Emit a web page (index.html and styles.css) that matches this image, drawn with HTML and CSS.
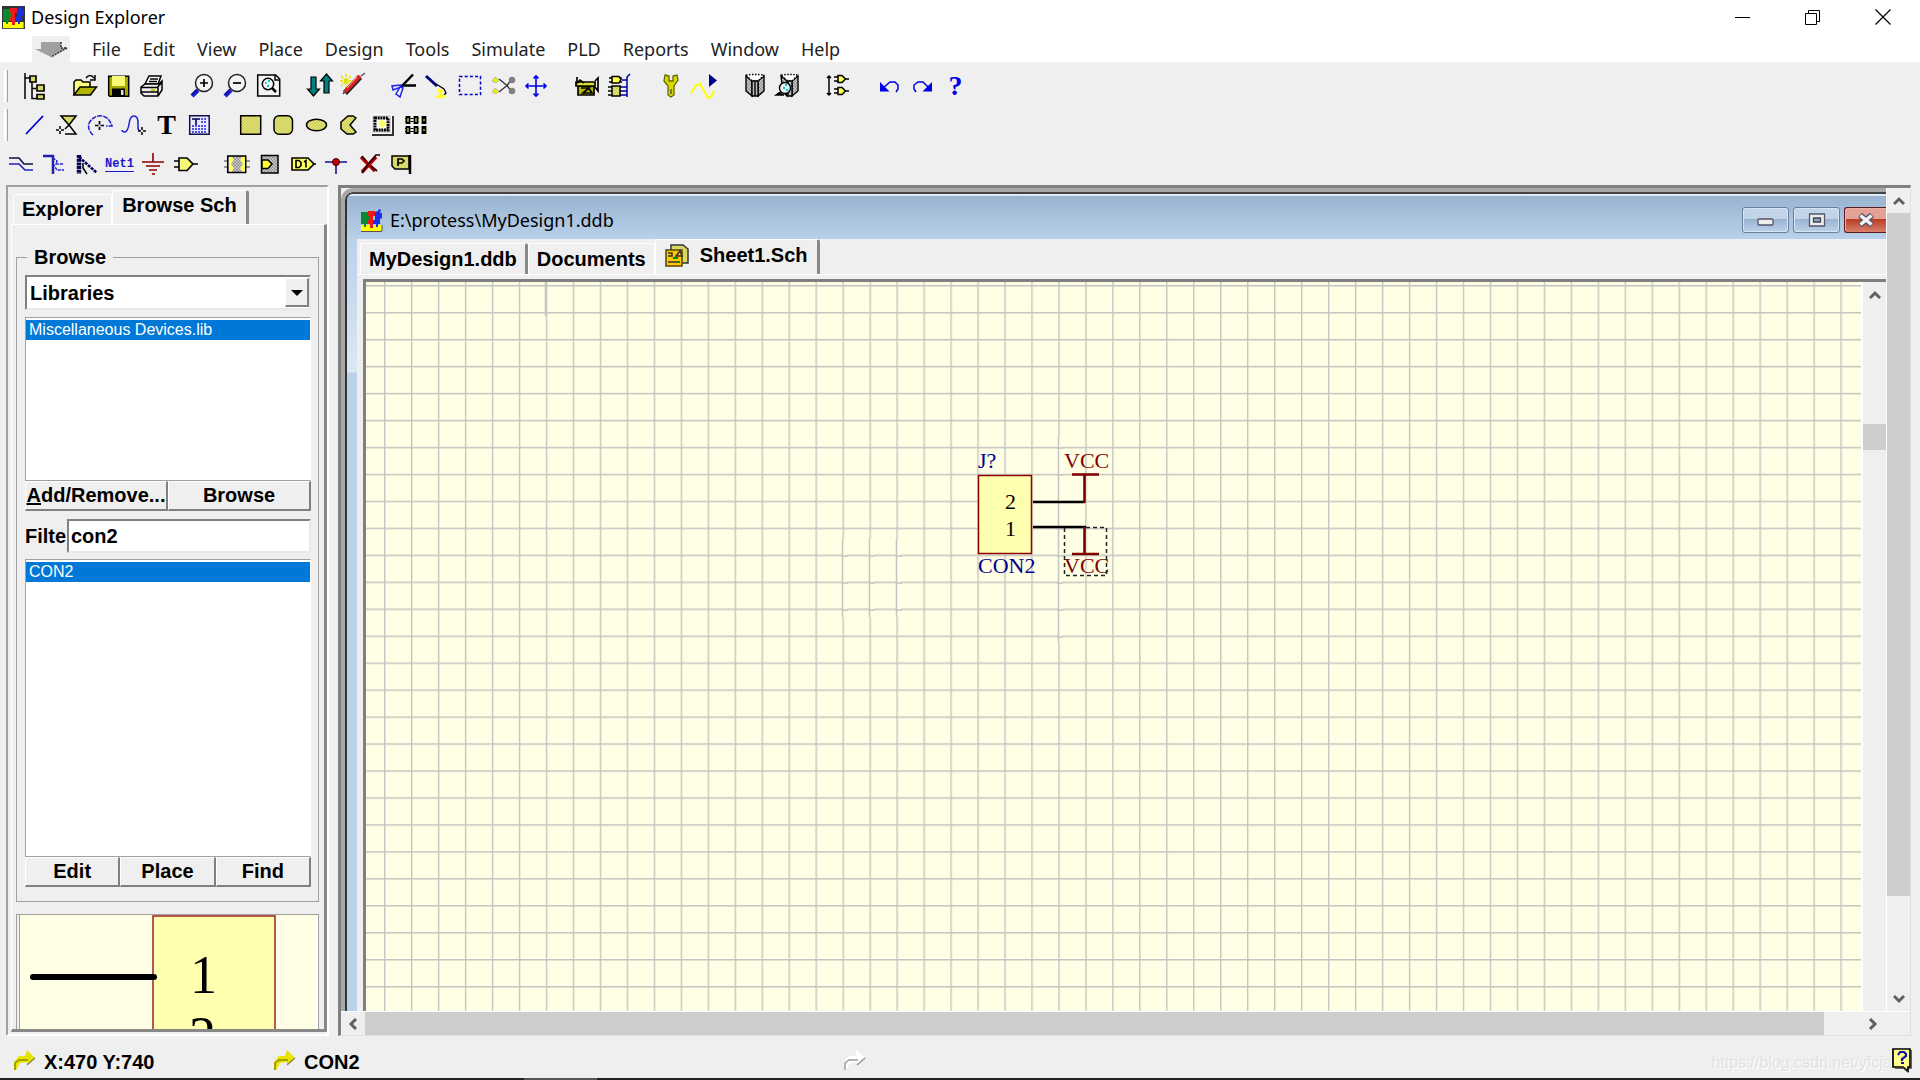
FILE: index.html
```
<!DOCTYPE html>
<html lang="en">
<head>
  <meta charset="UTF-8">
  <meta name="viewport" content="width=device-width, initial-scale=1.0">
  <title>Design Explorer</title>
  <link rel="stylesheet" href="styles.css">
</head>
<body>
  <!-- shared dither fills -->
  <svg class="defs" width="0" height="0" aria-hidden="true">
    <defs>
      <pattern id="dy" width="3" height="3" patternUnits="userSpaceOnUse"><rect width="3" height="3" fill="#e6e672"/><path d="M0 0h1.5v1.5H0zM1.5 1.5H3V3H1.5z" fill="#cbcb62"/></pattern>
      <pattern id="dg" width="3" height="3" patternUnits="userSpaceOnUse"><rect width="3" height="3" fill="#d0d0d0"/><path d="M0 0h1.5v1.5H0zM1.5 1.5H3V3H1.5z" fill="#8c8c8c"/></pattern>
      <pattern id="dl" width="3" height="3" patternUnits="userSpaceOnUse"><rect width="3" height="3" fill="#ffff50"/><path d="M0 0h1.5v1.5H0zM1.5 1.5H3V3H1.5z" fill="#f4f4a0"/></pattern>
      <symbol id="cross" viewBox="0 0 8 8"><path d="M4 0v3M4 5v3M0 4h3M5 4h3" stroke="#000" stroke-width="1.5"/></symbol>
      <symbol id="logo" viewBox="0 0 23 23">
        <path d="M1 16h21v6H1z" fill="#ff0"/>
        <path d="M1 3h7v4h2v4H8v4H6v3H4v-3H1z" fill="#0a8a2a"/>
        <path d="M8 2h7v5h-2v4h2v4h-2v4h-3v-4H8v-4h2V7H8z" fill="#f01818"/>
        <path d="M15 3l3-1 1-2 2 1-1 3h2v5l-2 1v5h-2v3h-2v-3h-3v-4h2V7z" fill="#1a30e0"/>
        <path d="M1 22.500h21M22 16v6" stroke="#555" stroke-width="1"/>
      </symbol>
      <symbol id="hint" viewBox="0 0 22 20">
        <path d="M0 20v-8l5-6h6l2-6 8 8-8 7v-3l-7 1-4 7z" fill="currentColor"/>
        <path d="M1 20v-7l4-3h9M13 15l8-7" fill="none" stroke="#000" stroke-opacity=".4" stroke-width="1.500"/>
      </symbol>
    </defs>
  </svg>

  <header class="titlebar">
    <svg class="logo dark" width="23" height="23"><use href="#logo"/></svg>
    <span class="title">Design Explorer</span>
    <button class="sysbtn" aria-label="Minimize"><svg width="16" height="16"><path d="M0 8.500h15" stroke="#000"/></svg></button>
    <button class="sysbtn" aria-label="Restore"><svg width="16" height="16" fill="none" stroke="#000"><path d="M.5 4.500h11v11H.5zM3.500 4.500v-3h11v11h-3"/></svg></button>
    <button class="sysbtn" aria-label="Close"><svg width="16" height="16"><path d="M.5 .5l15 15M15.500 .5l-15 15" stroke="#000" stroke-width="1.2"/></svg></button>
  </header>

  <nav class="menubar">
    <button class="menu-arrow" aria-label="System menu"><svg width="34" height="18"><path d="M7 2h20v6h6l-16 9L1 9h6z" fill="#a0a0a0"/><path d="M27 2v6h6l-16 9" fill="none" stroke="#333" stroke-width="1.500" stroke-dasharray="2 1"/></svg></button>
    <a href="#">File</a>
    <a href="#">Edit</a>
    <a href="#">View</a>
    <a href="#">Place</a>
    <a href="#">Design</a>
    <a href="#">Tools</a>
    <a href="#">Simulate</a>
    <a href="#">PLD</a>
    <a href="#">Reports</a>
    <a href="#">Window</a>
    <a href="#">Help</a>
  </nav>

  <div class="toolbars">
    <div class="toolbar">
      <span class="grip"></span>
      <div class="group">
        <button aria-label="Toggle panel"><svg viewBox="0 0 26 26" fill="url(#dy)" stroke="#000" stroke-width="1.500"><path d="M3 0v26M3 5h5M10 9v16.500h4M10 15.500h4" fill="none"/><path d="M8 3h6v6H8zM15 12h7v6h-7zM15 21.500h7V26h-7z" stroke-width="1.700"/></svg></button>
      </div>
      <div class="group">
        <button aria-label="Open"><svg viewBox="0 0 26 26" stroke="#000" stroke-width="1.500"><path d="M1 22V9l2-2h5l2 2h7v5" fill="#ffff80"/><path d="M1 22l6-8h16.500l-6 8z" fill="#b4b400"/><path d="M13 5q4-5 8 0M22 2v5h-5" fill="none"/></svg></button>
        <button aria-label="Save"><svg viewBox="0 0 26 26"><path d="M2.700 3.200h20v20h-19l-1-1z" fill="#a8a800" stroke="#000" stroke-width="1.500"/><path d="M6 3h13v10H6z" fill="url(#dl)"/><path d="M6 15.500h13V23H6z" fill="#000"/><path d="M15 17h2.500v5H15z" fill="#ddd"/></svg></button>
        <button aria-label="Print"><svg viewBox="0 0 26 26" stroke="#000" stroke-width="1.500" fill="#eee"><path d="M6 11l4-8h12l-3 8z" fill="#fff"/><path d="M11 6h8M10 8.500h8" /><path d="M2 14l4-3h14l3-3v9l-4 6H5l-3-3z"/><path d="M2 14.500h16l5-5M2 19h17M19 14v9" fill="none"/><path d="M12 17h4" stroke="#cc0" stroke-width="2"/></svg></button>
      </div>
      <div class="group">
        <button aria-label="Zoom in"><svg viewBox="0 0 26 26"><path d="M2 23l6-6" stroke="#1a1ac8" stroke-width="4.500"/><path d="M2 21l6-6" stroke="#000080" stroke-width="1"/><circle cx="14" cy="10" r="8.500" fill="#f4f4f4" stroke="#222" stroke-width="1.500"/><path d="M10 10h8M14 6v8" stroke="#000" stroke-width="1.700"/></svg></button>
        <button aria-label="Zoom out"><svg viewBox="0 0 26 26"><path d="M2 23l6-6" stroke="#1a1ac8" stroke-width="4.500"/><path d="M2 21l6-6" stroke="#000080" stroke-width="1"/><circle cx="14" cy="10" r="8.500" fill="#f4f4f4" stroke="#222" stroke-width="1.500"/><path d="M10 10h8" stroke="#000" stroke-width="1.700"/></svg></button>
        <button aria-label="Fit document"><svg viewBox="0 0 26 26" fill="none" stroke="#000" stroke-width="1.500"><path d="M1.700 2h18l4 4v17h-22z" fill="#f4f4f4"/><path d="M19 2v5h5"/><circle cx="12" cy="11" r="5.700"/><path d="M16 15l4 4" stroke-width="2.500"/><path d="M9 10h1.500M12 8h2M11 13h2" stroke="#0cc" stroke-width="2"/></svg></button>
      </div>
      <div class="group">
        <button aria-label="Up/down hierarchy"><svg viewBox="0 0 26 26" fill="#008080" stroke="#000" stroke-width="1.200"><path d="M4 4h5v12h3.500l-6 7-6-7H4z"/><path d="M17 20h5V8h3.500l-6-7-6 7H17z"/></svg></button>
        <button aria-label="Cross probe"><svg viewBox="0 0 26 26"><path d="M1 3l11 11M6 1v14M0 8h14M11 3L1 13" stroke="#e4e000" stroke-width="1.500" stroke-dasharray="3 1"/><path d="M5 20L20 4" stroke="#222" stroke-width="5.500"/><path d="M5 19L20 3" stroke="#e02020" stroke-width="4"/><path d="M7 15L17 4" stroke="#ffb0b0" stroke-width="1"/><path d="M21 3l4-3M3 21l2-3" stroke="#555" stroke-width="1.500"/></svg></button>
      </div>
      <div class="group">
        <button aria-label="Cut"><svg viewBox="0 0 26 26" fill="none"><path d="M10 14L22 1.500M11 12.500h14" stroke="#000" stroke-width="2.500"/><path d="M10 12L1 13l1 4 8-3zM9 14l-4 7 4 3 3-9z" stroke="#2222f0" stroke-width="1.500"/></svg></button>
        <button aria-label="Paste"><svg viewBox="0 0 26 26" fill="none"><path d="M2 3l11 10" stroke="#000080" stroke-width="3"/><path d="M12 11l8 5 2 4-2 2" stroke="#000" stroke-width="1.300"/><path d="M14 15l6 3-3 3 4 1v3h-9v-2l4-2-3-3z" fill="#ffff30"/></svg></button>
        <button aria-label="Select area"><svg viewBox="0 0 26 26"><path d="M2.500 3.500h21v18h-21z" fill="none" stroke="#0000c0" stroke-width="1.500" stroke-dasharray="3 2.200"/></svg></button>
        <button aria-label="Deselect"><svg viewBox="0 0 26 26"><path d="M9 6l8 6.500L9 19M17 12.500l3-4M17 12.500l3 4" fill="none" stroke="#333" stroke-width="1.300"/><path d="M5 4l4 3-3 3-4-2zM5 15l4 3-3 3-4-2z" fill="#ee0" stroke="#aaa" stroke-width=".7"/><circle cx="22" cy="7" r="3.300" fill="#808080"/><circle cx="22" cy="18" r="3.300" fill="#808080"/></svg></button>
        <button aria-label="Move selection"><svg viewBox="0 0 26 26" fill="none" stroke="#0000f0" stroke-width="1.600"><path d="M13 3v20M3 13h20M10.500 5.500L13 3l2.500 2.500M10.500 20.500L13 23l2.500-2.500M5.500 10.500L3 13l2.500 2.500M20.500 10.500L23 13l-2.500 2.500"/></svg></button>
      </div>
      <div class="group">
        <button aria-label="Library"><svg viewBox="0 0 26 26" stroke="#000" stroke-width="1.700"><path d="M4 13h16v9H4z" fill="#b8b800"/><path d="M2 9h19v4H2z" fill="#dd3"/><path d="M3 4v6l3-3 4 3M21 8l3-3v13l-3-4M7 15h8l-6 5h9l-4-6" fill="none"/></svg></button>
        <button aria-label="Simulate"><svg viewBox="0 0 26 26" stroke="#000" stroke-width="1.500" fill="#ffff50"><path d="M2 5h13M2 9h13M1 14h14M1 18h14M1 22h14"/><path d="M5 3.500h7l2 3-2 3.500H5z"/><path d="M5 13h8v10H5z" fill="url(#dy)"/><path d="M15 7h5M15 14h5M15 18h5M15 22h5M20 24V4l3-3" stroke="#0000a0" fill="none"/></svg></button>
      </div>
      <div class="group">
        <button aria-label="Setup"><svg viewBox="0 0 26 26"><path d="M7 2l4 1v5h4V3l4-1 1 5-4 6v9l-3 2-3-2v-9L6 8z" fill="#dada00" stroke="#666600" stroke-width="1.300"/><path d="M13 16v5" stroke="#555" stroke-width="1.500"/></svg></button>
        <button aria-label="Run simulation"><svg viewBox="0 0 26 26"><path d="M0 20l5-8 4-1 4 7 4 7 3-1 3-6" fill="none" stroke="#ff0" stroke-width="2"/><path d="M18 1l8 6.500-8 6.500z" fill="#000090"/></svg></button>
      </div>
      <div class="group">
        <button aria-label="Browse library"><svg viewBox="0 0 26 26" stroke="#000" stroke-width="1.400"><path d="M4 3l6 5v15l-6-5zM22 3l-6 5v15l6-5z" fill="url(#dg)"/><path d="M4 2q9-1 18 0l-6 6h-6z" fill="#fff" stroke-dasharray="1.500 1.500"/><path d="M10 8h6v15h-6zM13 8v15" fill="#bbb"/></svg></button>
        <button aria-label="Find component"><svg viewBox="0 0 26 26" stroke="#000" stroke-width="1.400"><path d="M6 3l6 5v15l-4-4zM23 3l-6 5v15l6-5z" fill="url(#dg)"/><path d="M6 2q9-1 17 0l-6 6h-4z" fill="#fff" stroke-dasharray="1.500 1.500"/><path d="M13 8h4v15h-4z" fill="#bbb"/><circle cx="10" cy="15" r="5.500" fill="#e8f4f4"/><path d="M5 19l-4 3h8" fill="#000"/><path d="M8 15h2M10 12h2M11 17h2" stroke="#0cc" stroke-width="2"/></svg></button>
      </div>
      <div class="group">
        <button aria-label="Increment part"><svg viewBox="0 0 26 26" stroke="#000" stroke-width="1.500" fill="#ffff50"><path d="M3 3v19M1 5l2-2 2 2M1 20l2 2 2-2" fill="none"/><path d="M8 4h4M8 8h4M19 6h4M8 16h4M8 20h4M19 18h4"/><path d="M12 2.500h4l3.500 3.500L16 9.500h-4zM12 14.500h4l3.500 3.500-3.500 3.500h-4z"/></svg></button>
      </div>
      <div class="group">
        <button aria-label="Undo"><svg viewBox="0 0 26 26"><path d="M6 15l7-6h5l3 3v4l-2 3" fill="none" stroke="#0000e8" stroke-width="1.500"/><path d="M3 9v9.500h9.500z" fill="#0000e8"/></svg></button>
        <button aria-label="Redo"><svg viewBox="0 0 26 26"><path d="M19 15l-6-6H8l-4 3v4l2 3" fill="none" stroke="#0000e8" stroke-width="1.500"/><path d="M22 9v9.500h-9.500z" fill="#0000e8"/></svg></button>
        <button class="help" aria-label="Help">?</button>
      </div>
    </div>

    <div class="toolbar">
      <span class="grip"></span>
      <div class="group">
        <button aria-label="Line"><svg viewBox="0 0 26 26"><path d="M4 22L21 4" stroke="#0000d0" stroke-width="1.800"/></svg></button>
        <button aria-label="Polygon"><svg viewBox="0 0 26 26" stroke="#000" stroke-width="1.500"><path d="M6 4h15l-7 9z" fill="url(#dy)"/><path d="M14 13l7 9H10M14 13l-4 4" fill="none"/><use href="#cross" x="1" y="14" width="8" height="8"/></svg></button>
        <button aria-label="Arc"><svg viewBox="0 0 26 26"><path d="M5 23Q-2 16 2 9.500 7 3 14 4q7 1 10 10h-6" fill="none" stroke="#2020d0" stroke-width="1.500" stroke-dasharray="5 1"/><use href="#cross" x="7" y="9" width="9" height="9"/></svg></button>
        <button aria-label="Bezier"><svg viewBox="0 0 26 26"><path d="M1 18q0 2 3 2 3-1 4-8 1-8 5-8 4 0 4 7v6l2 2" fill="none" stroke="#2020d0" stroke-width="1.500"/><use href="#cross" x="17" y="15" width="8" height="8"/></svg></button>
        <button class="text-tool" aria-label="Text">T</button>
        <button aria-label="Text frame"><svg viewBox="0 0 26 26"><path d="M2.700 3.700h19.500v18.500H2.700z" fill="#e8e8ff" stroke="#10104a" stroke-width="1.500"/><path d="M5 7h8M9 7v6" stroke="#000050" stroke-width="1.600"/><path d="M14 7h6M14 10h6M5 14h15M5 17h15M5 20h15" stroke="#2020e0" stroke-width="1.300" stroke-dasharray="2 1"/></svg></button>
      </div>
      <div class="group">
        <button aria-label="Rectangle"><svg viewBox="0 0 26 26" fill="url(#dy)" stroke="#000" stroke-width="1.500"><path d="M2.700 3.700h20v18.500h-20z"/></svg></button>
        <button aria-label="Rounded rectangle"><svg viewBox="0 0 26 26" fill="url(#dy)" stroke="#000" stroke-width="1.500"><rect x="3" y="3.700" width="18.500" height="18.500" rx="5"/></svg></button>
        <button aria-label="Ellipse"><svg viewBox="0 0 26 26" fill="url(#dy)" stroke="#000" stroke-width="1.500"><ellipse cx="12.500" cy="13" rx="10" ry="5.700"/></svg></button>
        <button aria-label="Pie"><svg viewBox="0 0 26 26" fill="url(#dy)" stroke="#000" stroke-width="1.500"><path d="M19 6l-3-2h-5L4 10v7l6 5h6l3-2-6-7z"/></svg></button>
        <button aria-label="Picture"><svg viewBox="0 0 26 26"><path d="M2 4h22v20H2z" fill="#333"/><path d="M1.500 2.500h20v19h-20z" fill="#d8d8d8" stroke="#fff"/><path d="M5 6h13v12H5z" fill="#fff" stroke="#000" stroke-width="3" stroke-dasharray="2 .7"/><path d="M9 9l4-1 4 4-4 4-4-2z" fill="#ff6"/></svg></button>
        <button aria-label="Array"><svg viewBox="0 0 26 26" fill="#dd6" stroke="#000" stroke-width="1.800"><path d="M3.500 5h3v6h-3zM11.500 5h3v6h-3zM19.500 5h3v6h-3zM3.500 15h3v6h-3zM11.500 15h3v6h-3zM19.500 15h3v6h-3z"/><path d="M2 6.500h22M2 9.500h22M2 16.500h22M2 19.500h22" stroke-width="1" stroke-dasharray="1.500 4 3 3.500"/></svg></button>
      </div>
    </div>

    <div class="toolbar">
      <div class="group">
        <button aria-label="Wire"><svg viewBox="0 0 26 26" fill="none" stroke="#10104a" stroke-width="1.600"><path d="M1 7h10l5 6h9"/><path d="M1 13h10l6 6h8" stroke="#2020c0"/></svg></button>
        <button aria-label="Bus"><svg viewBox="0 0 26 26" fill="none"><path d="M2 5h10v18" stroke="#2020b0" stroke-width="2.500"/><path d="M12 7l4 3-1 3h8M12 13l4 6h7" stroke="#2020d0" stroke-width="1.400" stroke-dasharray="3 1"/></svg></button>
        <button aria-label="Bus entry"><svg viewBox="0 0 26 26" fill="none"><path d="M5 4v19" stroke="#000050" stroke-width="4.500" stroke-dasharray="3 .7"/><path d="M5 6l18 16" stroke="#000060" stroke-width="2.600" stroke-dasharray="3 1"/><path d="M9 12v5l4 6" stroke="#000" stroke-width="1.500"/></svg></button>
        <button class="net" aria-label="Net label">Net1</button>
        <button aria-label="Power port"><svg viewBox="0 0 26 26" stroke="#900000" stroke-width="1.600"><path d="M13 2v9M2 11h22M6 15h14M9 19h8M12 23h3"/></svg></button>
        <button aria-label="Part"><svg viewBox="0 0 26 26" stroke="#000" stroke-width="1.600" fill="url(#dl)"><path d="M1 10h5M1 16h5M19 13h6"/><path d="M6 7h8l6 6-6 6.500H6z"/></svg></button>
      </div>
      <div class="group">
        <button aria-label="Sheet symbol"><svg viewBox="0 0 26 26"><path d="M0 10h26M0 16h26" stroke="#777" stroke-width="1.500"/><path d="M3.700 5h18v16.500h-18z" fill="url(#dg)" stroke="#000" stroke-width="1.500"/><path d="M5 6h3l2 3-3 4 3 4-2 3.500H5zM21 6h-3l-2 3 3 4-3 4 2 3.500h3z" fill="#ff6"/></svg></button>
        <button aria-label="Sheet entry"><svg viewBox="0 0 26 26" stroke="#000" stroke-width="1.500"><path d="M4.500 4.500h16.500v17.500H4.500z" fill="url(#dg)"/><path d="M5 9h6l4 4-4 4.500H5z" fill="#ff3"/></svg></button>
        <button aria-label="Port"><svg viewBox="0 0 26 26" stroke="#000" stroke-width="1.600"><path d="M2 7h16l6 6-6 6H2z" fill="#ffff60"/><path d="M24 13h2"/><path d="M6 9.500h3l2 2v3L9 16.500H6zM14 11l2-1.500v7" fill="none"/></svg></button>
        <button aria-label="Junction"><svg viewBox="0 0 26 26"><path d="M2 11h22M13 11v12" stroke="#101090" stroke-width="1.600"/><circle cx="13" cy="11" r="3.500" fill="#c00000" stroke="#400"/></svg></button>
        <button aria-label="No ERC"><svg viewBox="0 0 26 26"><path d="M5 6l14 14M20 6L6 21" stroke="#b00" stroke-width="3.500"/><path d="M6 5l4 5M24 4h-4l-7 8-7 10M15 15l6 5" fill="none" stroke="#200" stroke-width="1.700"/></svg></button>
        <button aria-label="PCB layout"><svg viewBox="0 0 26 26" fill="none" stroke="#000"><path d="M3 5h17v13H6l-3-3z" fill="url(#dy)" stroke-width="1.500"/><path d="M21 4v19" stroke-width="2.500"/><path d="M9 15V8h4l2 2-2 2H9" stroke-width="1.700"/></svg></button>
      </div>
    </div>
  </div>

  <main class="workspace">
    <aside class="panel">
      <div class="tabs">
        <button class="tab">Explorer</button>
        <button class="tab active">Browse Sch</button>
      </div>
      <div class="page">
        <fieldset class="browse">
          <legend>Browse</legend>
          <div class="combo">
            <select aria-label="Browse">
              <option>Libraries</option>
            </select>
            <span class="combo-arrow"></span>
          </div>
          <ul class="list libs" role="listbox" aria-label="Libraries">
            <li class="selected" role="option">Miscellaneous Devices.lib</li>
          </ul>
          <div class="btn-row">
            <button><u>A</u>dd/Remove...</button>
            <button>Browse</button>
          </div>
          <div class="filter">
            <label for="filter">Filte</label>
            <input type="text" id="filter" value="con2">
          </div>
          <ul class="list parts" role="listbox" aria-label="Components">
            <li class="selected" role="option">CON2</li>
          </ul>
          <div class="btn-row">
            <button>Edit</button>
            <button>Place</button>
            <button>Find</button>
          </div>
        </fieldset>
        <div class="preview">
          <svg width="100%" height="100%">
            <rect x="133" y="1" width="122" height="180" fill="#ffffb0" stroke="#a02020" stroke-width="1.500"/>
            <path d="M13 62h121" stroke="#000" stroke-width="6" stroke-linecap="round"/>
            <text x="170" y="78">1</text>
            <text x="169" y="139">2</text>
          </svg>
        </div>
      </div>
    </aside>

    <section class="mdi">
      <div class="doc">
        <div class="doc-title">
          <svg class="logo" width="23" height="23"><use href="#logo"/></svg>
          <span>E:\protess\MyDesign1.ddb</span>
          <div class="doc-btns">
            <button aria-label="Minimize"><svg width="18" height="14"><rect x="1" y="6" width="15" height="6" rx="1" fill="#eee" stroke="#556" stroke-width="1.300"/></svg></button>
            <button aria-label="Maximize"><svg width="18" height="14"><path d="M1.500 1h15v12h-15z" fill="#eee" stroke="#556" stroke-width="1.300"/><path d="M5.500 5h7v4h-7z" fill="#8aa4c4" stroke="#445" stroke-width="1.300"/></svg></button>
            <button class="close" aria-label="Close"><svg width="18" height="14"><path d="M3 2l12 10M15 2L3 12" stroke="#545468" stroke-width="6"/><path d="M3.500 2.500l11 9M14.500 2.500l-11 9" stroke="#f4f4f4" stroke-width="3.500"/></svg></button>
          </div>
        </div>
        <div class="doc-body">
          <div class="tabs doc-tabs">
            <button class="tab bar">MyDesign1.ddb</button>
            <button class="tab">Documents</button>
            <button class="tab active"><svg width="25" height="23"><path d="M6 1h12l5 4v14H6z" fill="#d8d860" stroke="#333" stroke-width="1.500"/><path d="M1 6h16v16H1z" fill="#ffc800" stroke="#554400" stroke-width="1.500"/><path d="M3 9h4v3H3M3 18h11M11 12l4-5 2 5z" fill="none" stroke="#333" stroke-width="1.500"/><path d="M8 14h5M12 18h3" stroke="#080" stroke-width="2"/></svg>Sheet1.Sch</button>
          </div>
          <div class="sheet">
            <svg class="canvas" width="100%" height="100%">
              <defs>
                <pattern id="grid" x="18" y="3" width="26.970" height="26.960" patternUnits="userSpaceOnUse">
                  <path d="M.7 0v27M0 .7h27" stroke="#c4c4c0" stroke-width="1.400"/>
                </pattern>
              </defs>
              <rect width="100%" height="100%" fill="url(#grid)"/>
              <!-- grid left over from earlier redraws -->
              <path d="M477 257h4v78h-4zM504 257h4v78h-4zM531 257h4v78h-4zM692 154h4v207h-4z" fill="#ffffe6"/>
              <path d="M476 274h6M476 301h6M476 328h6M503 274h6M503 301h6M503 328h6M530 274h6M530 301h6M530 328h6M691 166h6M691 193h6M691 220h6M691 247h6M691 274h6M691 301h6M691 328h6M691 355h6" stroke="#c4c4c0" stroke-width="1.400"/>
              <path d="M179.500 0v34M476.500 257v78M503.500 257v78M530.500 257v78M692.500 154v207" stroke="#c4c4c0" stroke-width="1.500"/>
              <rect class="part" x="612.500" y="193.500" width="53" height="78"/>
              <path d="M667 220h52M667 245h53" stroke="#000" stroke-width="2.600"/>
              <path class="power" d="M706 192.500h27M718.500 192v29M718.500 245v27M706 272h27"/>
              <text class="pin" x="639" y="227">2</text>
              <text class="pin" x="639" y="254">1</text>
              <text class="name" x="612" y="186">J?</text>
              <text class="name" x="612" y="291">CON2</text>
              <text class="net-name" x="698" y="186">VCC</text>
              <text class="net-name" x="698" y="291">VCC</text>
              <path d="M720 245.500h20.500v48h-42v-48" fill="none" stroke="#222" stroke-width="1.500" stroke-dasharray="4 3"/>
            </svg>
            <div class="scroll vertical inner">
              <button aria-label="Scroll up"><svg width="12" height="10"><path d="M1 8l5-5 5 5" /></svg></button>
              <span class="thumb"></span>
            </div>
          </div>
        </div>
      </div>
      <div class="scroll vertical">
        <button aria-label="Scroll up"><svg width="12" height="10"><path d="M1 8l5-5 5 5"/></svg></button>
        <span class="thumb"></span>
        <button class="end" aria-label="Scroll down"><svg width="12" height="10"><path d="M1 2l5 5 5-5"/></svg></button>
      </div>
      <div class="scroll horizontal">
        <button aria-label="Scroll left"><svg width="10" height="12"><path d="M8 1L3 6l5 5"/></svg></button>
        <span class="thumb"></span>
        <button class="end" aria-label="Scroll right"><svg width="10" height="12"><path d="M2 1l5 5-5 5"/></svg></button>
      </div>
    </section>
  </main>

  <footer class="status">
    <div class="cell coords"><svg class="hint" width="22" height="20"><use href="#hint"/></svg><span>X:470 Y:740</span></div>
    <div class="cell item"><svg class="hint" width="22" height="20"><use href="#hint"/></svg><span>CON2</span></div>
    <div class="cell idle"><svg class="hint off" width="22" height="20"><use href="#hint"/></svg></div>
    <span class="watermark">https://blog.csdn.net/yfcja</span>
    <button class="tip" aria-label="Help advisor"><svg width="20" height="25"><path d="M1 1h17v18h-2v4l-5-4H1z" fill="#ffff90" stroke="#000" stroke-width="1.700"/><path d="M19 2v18h-2M3 20h9l4 4" fill="none" stroke="#333" stroke-width="1.500"/><path d="M6 7l2-3h4l2 2v2l-4 3v2M9 15h3" fill="none" stroke="#1010a0" stroke-width="2.200"/></svg></button>
  </footer>
  <div class="taskbar"><span></span></div>
</body>
</html>
```
FILE: styles.css
```
* { box-sizing: border-box; }
html, body { height: 100%; }
body { margin: 0; display: flex; flex-direction: column; background: #efefef; color: #000; font-family: "Liberation Sans", Arial, sans-serif; font-size: 20px; overflow: hidden; }
button { font: inherit; color: inherit; background: none; border: none; padding: 0; margin: 0; }
.defs { position: absolute; }

/* title and menu */
.titlebar { display: flex; align-items: center; height: 36px; padding: 0 2px 2px; background: #fff; font-family: "Noto Sans", sans-serif; font-size: 18px; }
.logo.dark { background: #333; }
.title { flex: 1; padding-left: 6px; }
.sysbtn { width: 70px; height: 34px; display: flex; align-items: center; justify-content: center; }
.menubar { display: flex; align-items: center; gap: 22px; height: 26px; padding-left: 32px; background: #fff; font-family: "Noto Sans", sans-serif; font-size: 18px; }
.menubar a { color: #222; text-decoration: none; }
.menu-arrow { display: flex; align-items: center; justify-content: center; width: 38px; height: 26px; background: #efefef; }

/* toolbars */
.toolbars { padding-top: 4px; height: 123px; }
.toolbar { display: flex; align-items: center; gap: 18px; height: 39px; padding-left: 4px; }
.toolbar .grip { width: 4px; height: 32px; margin-right: -8px; border-left: 2px solid #fff; border-right: 1px solid #a0a0a0; }
.toolbar .group { display: flex; }
.toolbar .group button { width: 33px; height: 33px; display: flex; align-items: center; justify-content: center; }
.toolbar .group svg { width: 26px; height: 26px; overflow: visible; }
.toolbar .help { font: bold 28px "Liberation Serif", serif; color: #0000e8; }
.toolbar .text-tool { font: bold 28px "Liberation Serif", serif; }
.toolbar .net { font: bold 12px "Liberation Mono", monospace; color: #1818c8; text-decoration: underline; text-underline-offset: 4px; }

/* left panel */
.workspace { flex: 1; min-height: 0; display: flex; gap: 9px; padding: 0 9px 0 6px; }
.panel { width: 323px; display: flex; flex-direction: column; padding: 3px 0 2px 3px; border: 2px solid #a0a0a0; border-right-color: #fff; border-bottom-color: #fff; overflow: hidden; }
.tabs { display: flex; align-items: flex-end; height: 34px; padding-left: 2px; font-weight: bold; }
.tab { height: 30px; padding: 0 8px; border: 1px solid #fff; border-bottom: none; border-radius: 3px 3px 0 0; white-space: nowrap; }
.tab.active { height: 34px; padding: 0 9px 4px; border-right: 3px solid #888; }
.page { flex: 1; min-height: 0; display: flex; flex-direction: column; gap: 12px; padding: 21px 5px 0 4px; border: 1px solid #fff; border-right: 3px solid #888; border-bottom: 3px solid #888; }
.browse { flex: 1; min-height: 0; min-width: 0; display: flex; flex-direction: column; margin: 0; padding: 7px 7px 14px 8px; border: 1px solid #a0a0a0; }
.browse legend { margin-left: 2px; padding: 0 7px; font-weight: bold; line-height: 22px; }
.combo { position: relative; height: 35px; margin-bottom: 7px; }
.combo select { appearance: none; width: 100%; height: 35px; padding: 0 3px; background: #fff; border: 2px solid #808080; border-right-color: #e8e8e8; border-bottom-color: #e8e8e8; border-radius: 0; font: bold 20px "Liberation Sans", Arial, sans-serif; color: #000; }
.combo-arrow { position: absolute; top: 3px; right: 2px; width: 24px; height: 29px; background: #efefef; border: 1px solid #fff; border-right: 2px solid #808080; border-bottom: 2px solid #808080; pointer-events: none; }
.combo-arrow::after { content: ""; display: block; margin: 11px 0 0 5px; width: 0; border: 6px solid transparent; border-top-color: #000; border-bottom: none; }
.list { list-style: none; margin: 0; padding: 2px 0 0; background: #fff; border: 1px solid #a0a0a0; border-right-color: #fff; font-size: 16px; line-height: 20px; }
.list li { padding-left: 3px; }
.list .selected { background: #0078d7; color: #fff; }
.libs { height: 164px; }
.parts { flex: 1; min-height: 0; }
.btn-row { display: flex; }
.btn-row button { flex: 1 1 0; min-width: 0; height: 30px; font-weight: bold; white-space: nowrap; overflow: hidden; border: 1px solid #fff; border-right: 2px solid #808080; border-bottom: 2px solid #808080; }
.filter { display: flex; align-items: center; height: 34px; margin: 8px 0 6px; font-weight: bold; }
.filter label { width: 42px; white-space: nowrap; }
.filter input { flex: 1; min-width: 0; height: 34px; padding: 0 2px; border: 2px solid #808080; border-right-color: #e8e8e8; border-bottom-color: #e8e8e8; font: inherit; color: #000; }
.preview { height: 115px; padding-left: 2px; border: 1px solid #a0a0a0; border-bottom: none; }
.preview svg { display: block; background: #ffffe6; border-left: 1px solid #a0a0a0; border-right: 2px solid #fff; }
.preview text { font: 54px "Liberation Serif", serif; }

/* document area */
.mdi { flex: 1; min-width: 0; display: grid; grid-template-columns: 1fr 24px; grid-template-rows: 1fr 24px; border: 3px solid #808080; border-right: 1px solid #e0e0e0; border-bottom: 1px solid #e0e0e0; background: #efefef; }
.doc { min-width: 0; min-height: 0; display: flex; flex-direction: column; padding-left: 10px; background: linear-gradient(#b9d1ea 43px, #dce8f5 178px, #b9d1ea 179px); border-left: 2px solid #333; border-top: 2px solid #444; border-radius: 8px 0 0 0; outline: 4px solid #a8a8a8; margin: 4px 0 0 4px; overflow: hidden; }
.doc-title { display: flex; align-items: center; height: 45px; margin-left: -10px; padding: 5px 0 0 13px; background: linear-gradient(#99b4d1, #b9d1ea); border-top: 2px solid #dfe9f3; font-family: "Noto Sans", sans-serif; font-size: 18px; }
.doc-title span { padding-left: 7px; }
.doc-btns { display: flex; gap: 4px; margin-left: auto; }
.doc-btns button { width: 47px; height: 26px; display: flex; align-items: center; justify-content: center; border: 1px solid #6a7f9c; border-radius: 3px; box-shadow: inset 0 0 0 1px #d6e4f4; background: linear-gradient(#c2d4e9 45%, #98b2d0 46%, #bcd2ea); }
.doc-btns .close { width: 42px; border-color: #5a1c20; border-right: none; border-radius: 3px 0 0 3px; box-shadow: inset 1px 1px 0 #eab0a8; background: linear-gradient(#e6a195 45%, #b93a20 46%, #d8826c); }
.doc-body { flex: 1; min-height: 0; display: flex; flex-direction: column; background: #efefef; }
.doc-tabs { height: 36px; padding-left: 3px; border-bottom: 1px solid #fff; }
.doc-tabs .tab { height: 31px; }
.doc-tabs .tab.bar { border-right: 3px solid #888; }
.doc-tabs .tab.active { height: 35px; display: flex; align-items: center; gap: 10px; }
.sheet { flex: 1; min-height: 0; display: flex; margin: 4px 0 0 6px; border-top: 3px solid #808080; border-left: 3px solid #808080; }
.canvas { flex: 1; min-width: 0; background: #ffffe6; font: 22px "Liberation Serif", serif; }
.part { fill: #ffffb0; stroke: #900000; stroke-width: 1.5; }
.power { fill: none; stroke: #800000; stroke-width: 2.6; }
.name { fill: #000090; }
.net-name { fill: #800000; }

/* scroll bars */
.scroll { display: flex; background: #efefef; }
.scroll button { flex: none; width: 23px; height: 25px; display: flex; align-items: center; justify-content: center; }
.scroll path { fill: none; stroke: #606060; stroke-width: 3; }
.scroll .thumb { background: #cdcdcd; }
.scroll .end { margin-top: auto; }
.vertical { flex-direction: column; border-left: 1px solid #fff; }
.vertical .thumb { flex: 0 0 auto; height: 83%; }
.inner { width: 25px; border-left: 2px solid #fff; }
.inner .thumb { height: 26px; margin-top: 117px; }
.horizontal { grid-column: 1 / -1; border-top: 1px solid #fff; padding-right: 25px; }
.horizontal button { width: 24px; height: 23px; }
.horizontal .thumb { flex: 0 0 auto; width: calc(95% - 8px); }
.horizontal .end { margin: 0 0 0 auto; }

/* status bar */
.status { display: flex; align-items: center; height: 42px; padding: 11px 8px 0 14px; font-weight: bold; }
.status .cell { display: flex; align-items: center; gap: 8px; }
.status .hint { color: #e8e400; margin-top: -6px; }
.status .hint.off { color: #fff; }
.coords { width: 260px; }
.item { width: 570px; }
.watermark { margin-left: auto; font-size: 16px; font-weight: normal; color: #e2e2e2; text-shadow: 1px 1px 0 #fff; }
.taskbar { height: 2px; background: #222; }
.taskbar span { display: block; width: 73px; height: 2px; margin-left: 524px; background: #555; }
```
